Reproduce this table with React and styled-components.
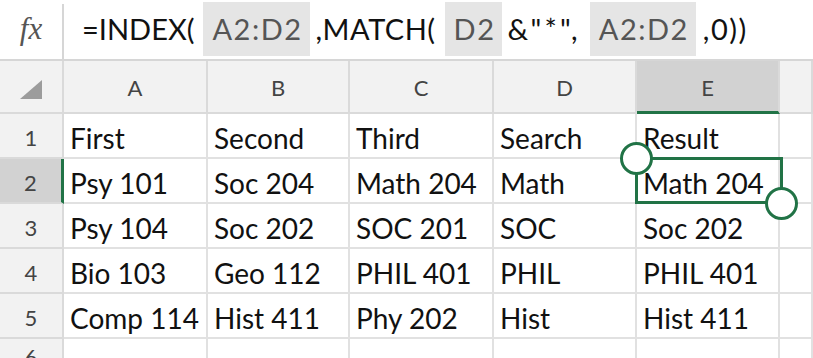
import React from "react";
import styled, { createGlobalStyle } from "styled-components";

const GlobalStyle = createGlobalStyle`
    html, body {
        margin: 0;
        padding: 0;
        background: #fff;
        overflow: hidden;
    }
    body {
        font-family: "Lato", "Noto Sans", sans-serif;
    }
`;

const Sheet = styled.div`
    width: 813px;
    height: 358px;
    background: #fff;
    overflow: hidden;
`;

const FormulaBar = styled.div`
    display: flex;
    height: 59px;
    border-bottom: 2px solid #d6d6d6;
`;

const FxBox = styled.div`
    width: 62px;
    display: flex;
    align-items: center;
    justify-content: center;
    border-right: 2px solid #d6d6d6;
    margin-top: 4px;
    font-family: "Liberation Serif", serif;
    font-style: italic;
    font-size: 31px;
    color: #555;
    padding-bottom: 6px;
`;

const Formula = styled.div`
    display: flex;
    align-items: center;
    padding-left: 18px;
    padding-bottom: 2px;
    font-size: 29px;
    color: #111;
    white-space: pre;
`;

const Part = styled.span`
    letter-spacing: ${(p) => p.$ls || 0}px;
`;

const Ref = styled.span`
    background: #e5e5e5;
    color: #555;
    letter-spacing: 1.5px;
    padding: 9px 7px 10px 9px;
    margin: 0 ${(p) => p.$right || 6}px 0 ${(p) => p.$left || 9}px;
`;

const Grid = styled.div`
    display: grid;
    grid-template-columns: 64px 144px 142px 144px 143px 143px 1fr;
    grid-template-rows: 53px repeat(5, 45px) 1fr;
    height: 297px;
`;

const ColHead = styled.div`
    background: ${(p) => (p.$active ? "#d2d2d2" : "#f2f2f2")};
    border-right: 2px solid #dadada;
    border-bottom: ${(p) => (p.$active ? "3px solid #217346" : "2px solid #dadada")};
    display: flex;
    align-items: center;
    justify-content: center;
    padding-top: 2px;
    font-size: 22px;
    color: #444;
`;

const CornerMark = styled.div`
    width: 0;
    height: 0;
    border-left: 22px solid transparent;
    border-bottom: 19px solid #9c9c9c;
    margin-top: 4px;
`;

const RowHead = styled.div`
    background: ${(p) => (p.$active ? "#d2d2d2" : "#f2f2f2")};
    border-right: ${(p) => (p.$active ? "3px solid #217346" : "2px solid #dadada")};
    border-bottom: 2px solid #dadada;
    display: flex;
    align-items: center;
    justify-content: center;
    padding-top: 4px;
    font-size: 22px;
    color: #444;
`;

const Cell = styled.div`
    position: relative;
    border-right: 2px solid #e1e1e1;
    border-bottom: 2px solid #e1e1e1;
    display: flex;
    align-items: center;
    padding: 4px 0 0 6px;
    font-size: 28px;
    color: #111;
    white-space: nowrap;
`;

const SelectBox = styled.div`
    position: absolute;
    z-index: 2;
    left: -2px;
    top: -2px;
    right: -5px;
    bottom: -2px;
    border: 3px solid #217346;
    pointer-events: none;
`;

const Handle = styled.div`
    position: absolute;
    width: 27px;
    height: 27px;
    border-radius: 50%;
    background: #fff;
    border: 3px solid #217346;
    ${(p) => (p.$start ? "left: -18px; top: -18px;" : "right: -18px; bottom: -19px;")}
`;

const cols = ["A", "B", "C", "D", "E"];

const rows = [
    ["First", "Second", "Third", "Search", "Result"],
    ["Psy 101", "Soc 204", "Math 204", "Math", "Math 204"],
    ["Psy 104", "Soc 202", "SOC 201", "SOC", "Soc 202"],
    ["Bio 103", "Geo 112", "PHIL 401", "PHIL", "PHIL 401"],
    ["Comp 114", "Hist 411", "Phy 202", "Hist", "Hist 411"],
];

const App = () => {
    return (
        <Sheet>
            <GlobalStyle />
            <FormulaBar>
                <FxBox>fx</FxBox>
                <Formula>
                    <Part>=INDEX(</Part>
                    <Ref>A2:D2</Ref>
                    <Part $ls={0.5}>,MATCH(</Part>
                    <Ref $right={5}>D2</Ref>
                    <Part $ls={3.2}>&amp;"*",</Part>
                    <Ref $left={9} $right={7}>A2:D2</Ref>
                    <Part $ls={1.5}>,0))</Part>
                </Formula>
            </FormulaBar>
            <Grid>
                <ColHead>
                    <CornerMark />
                </ColHead>
                {cols.map((c) => (
                    <ColHead key={c} $active={c === "E"}>{c}</ColHead>
                ))}
                <ColHead />
                {rows.map((r, i) => (
                    <React.Fragment key={i}>
                        <RowHead $active={i === 1}>{i + 1}</RowHead>
                        {r.map((v, j) => (
                            <Cell key={j}>
                                {v}
                                {i === 1 && j === 4 && (
                                    <SelectBox>
                                        <Handle $start />
                                        <Handle />
                                    </SelectBox>
                                )}
                            </Cell>
                        ))}
                        <Cell />
                    </React.Fragment>
                ))}
                <RowHead>6</RowHead>
                {cols.map((c) => (
                    <Cell key={c} />
                ))}
                <Cell />
            </Grid>
        </Sheet>
    );
};

export default App;
